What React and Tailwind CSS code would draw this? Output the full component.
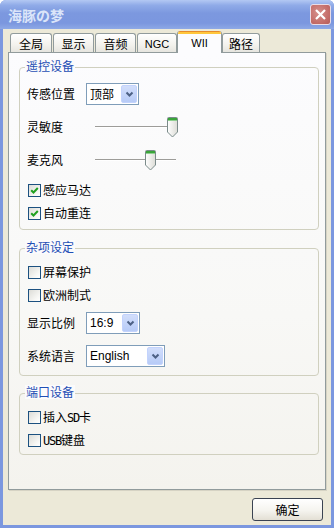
import React from "react";

const CJK = "font-['Noto_Sans_CJK_SC',sans-serif]";
const LAT = "font-['Liberation_Sans','Noto_Sans_CJK_SC',sans-serif]";
const MONO = "font-['DejaVu_Sans_Mono',monospace] text-[12px] tracking-[-1.2px]";

function Chevron() {
  return (
    <svg width="9" height="7" viewBox="0 0 9 7">
      <path d="M1.5 1.5 L4.5 4.5 L7.5 1.5" stroke="#4d6185" strokeWidth="2" fill="none" />
    </svg>
  );
}

function Select({ value, width, latin }) {
  return (
    <div
      className={`h-[22px] border border-[#7f9db9] bg-white flex items-center justify-between pl-[3px] pr-[1px] ${width}`}
    >
      <span className={`text-[12px] leading-[14px] text-black ${latin ? LAT : CJK}`}>{value}</span>
      <span className="w-[16px] h-[18px] rounded-[2px] border border-[#c3d3fd] bg-[linear-gradient(180deg,#d2defb,#b7cbf7)] flex items-center justify-center">
        <Chevron />
      </span>
    </div>
  );
}

function Checkbox({ checked }) {
  return (
    <span className="w-[13px] h-[13px] border border-[#1c5180] bg-[linear-gradient(135deg,#dcdcd7,#f7f7f4_70%,#ffffff)] flex items-center justify-center shrink-0">
      {checked && (
        <svg width="9" height="9" viewBox="0 0 9 9">
          <path d="M1.2 4.2 L3.5 6.5 L7.8 2" stroke="#21a121" strokeWidth="2" fill="none" />
        </svg>
      )}
    </span>
  );
}

function Thumb() {
  return (
    <svg width="11" height="21" viewBox="0 0 11 21">
      <defs>
        <linearGradient id="tb" x1="0" y1="0" x2="1" y2="0">
          <stop offset="0" stopColor="#ffffff" />
          <stop offset="1" stopColor="#dcdcd6" />
        </linearGradient>
      </defs>
      <path
        d="M1.5 0.5 H9.5 Q10.5 0.5 10.5 1.5 V15 L5.5 20 L0.5 15 V1.5 Q0.5 0.5 1.5 0.5 Z"
        fill="url(#tb)"
        stroke="#7b8b8a"
      />
      <rect x="1" y="1" width="9" height="2" fill="#3aa43a" />
      <rect x="1" y="3" width="9" height="1" fill="#8fd08f" />
    </svg>
  );
}

function Slider({ pos }) {
  const left = pos === "max" ? "left-[81px]" : "left-[59px]";
  return (
    <div className="relative w-[93px] h-[22px]">
      <div className="absolute left-[9px] w-[81px] top-[10px] h-[2px] border-t border-[#9d9c99] border-b border-b-white" />
      <div className={`absolute top-[1px] ${left}`}>
        <Thumb />
      </div>
    </div>
  );
}

function Group({ title, children, className }) {
  return (
    <div className={`relative border border-[#d0d0bf] rounded-[4px] ${className}`}>
      <span
        className={`absolute left-[5px] -top-[9px] px-[1px] text-[12px] leading-[14px] text-[#1f4fb5] bg-[#fbfbfc] ${CJK}`}
      >
        {title}
      </span>
      {children}
    </div>
  );
}

function Label({ children }) {
  return <span className={`w-[59px] text-[12px] leading-[14px] text-black ${CJK}`}>{children}</span>;
}

function CheckRow({ checked, children, className = "" }) {
  return (
    <div className={`h-[22px] flex items-center gap-[2px] ml-[1px] ${className}`}>
      <Checkbox checked={checked} />
      <span className={`text-[12px] leading-[14px] text-black ${CJK}`}>{children}</span>
    </div>
  );
}

function Tab({ children, width, latin }) {
  return (
    <div
      className={`h-[19px] border border-b-0 border-[#919b9c] rounded-t-[3px] bg-[linear-gradient(180deg,#ffffff,#f3f2ed_60%,#e6e5df)] flex items-center justify-center pt-[2px] text-black ${width} ${
        latin ? `${LAT} text-[11px]` : `${CJK} text-[12px]`
      }`}
    >
      {children}
    </div>
  );
}

export default function App() {
  return (
    <div className="w-[334px] h-[528px] bg-[#7b97df] flex flex-col overflow-hidden rounded-t-[6px]">
      {/* title bar */}
      <div className="h-[29px] shrink-0 flex items-center justify-between pl-[8px] pr-[3px] bg-[linear-gradient(180deg,#b3c8f3_0%,#90abe8_18%,#7c98df_45%,#7b97df_80%,#8ea9e6_100%)]">
        <span className={`text-[14px] font-bold text-[#dbe5f9] leading-[16px] ${CJK}`}>海豚の梦</span>
        <div className="w-[21px] h-[21px] rounded-[3px] border border-[#e9dce6] bg-[radial-gradient(circle_at_40%_40%,#d6908c,#c26a66_70%,#b35c5a)] flex items-center justify-center">
          <svg width="13" height="13" viewBox="0 0 13 13">
            <path d="M2 2 L11 11 M11 2 L2 11" stroke="#ffffff" strokeWidth="2.2" />
          </svg>
        </div>
      </div>

      {/* body */}
      <div className="flex-1 mx-[3px] mb-[3px] bg-[#ece9d8] flex flex-col">
        {/* tabs */}
        <div className="h-[23px] flex items-end pl-[7px] relative z-10">
          <Tab width="w-[42px]">全局</Tab>
          <div className="ml-[1px]">
            <Tab width="w-[41px]">显示</Tab>
          </div>
          <div className="ml-[1px]">
            <Tab width="w-[41px]">音频</Tab>
          </div>
          <div className="ml-[1px]">
            <Tab width="w-[40px]" latin>
              NGC
            </Tab>
          </div>
          <div className="w-[45px] h-[22px] -mb-[1px] border-x border-[#919b9c] rounded-t-[3px] overflow-hidden bg-[#fcfcfe] flex flex-col">
            <div className="h-[1px] bg-[#e68b2c]" />
            <div className="h-[2px] bg-[#ffc73c]" />
            <div className={`flex-1 flex items-start justify-center pt-[1px] text-[11px] text-black ${LAT}`}>WII</div>
          </div>
          <Tab width="w-[38px]">路径</Tab>
        </div>

        {/* panel */}
        <div className="mx-[5px] h-[438px] border border-[#919b9c] bg-[linear-gradient(180deg,#fcfcfe,#f8f8f6_60%,#f4f3ee)] shadow-[1px_1px_0_#d6d3c4] pt-[14px] pl-[10px] pr-[6px] flex flex-col">
          <Group title="遥控设备" className="pt-[15px] pb-[5px] pl-[7px]">
            <div className="h-[22px] flex items-center">
              <Label>传感位置</Label>
              <Select value="顶部" width="w-[53px]" />
            </div>
            <div className="h-[22px] flex items-center mt-[11px]">
              <Label>灵敏度</Label>
              <Slider pos="max" />
            </div>
            <div className="h-[22px] flex items-center mt-[11px]">
              <Label>麦克风</Label>
              <Slider pos="mid" />
            </div>
            <CheckRow checked className="mt-[8px]">
              感应马达
            </CheckRow>
            <CheckRow checked className="mt-[1px]">
              自动重连
            </CheckRow>
          </Group>

          <Group title="杂项设定" className="mt-[18px] pt-[12px] pb-[8px] pl-[7px]">
            <CheckRow>屏幕保护</CheckRow>
            <CheckRow className="mt-[1px]">欧洲制式</CheckRow>
            <div className="h-[22px] flex items-center mt-[6px]">
              <Label>显示比例</Label>
              <Select value="16:9" width="w-[54px]" latin />
            </div>
            <div className="h-[22px] flex items-center mt-[11px]">
              <Label>系统语言</Label>
              <Select value="English" width="w-[79px]" latin />
            </div>
          </Group>

          <Group title="端口设备" className="mt-[17px] pt-[12px] pb-[3px] pl-[7px]">
            <CheckRow>
              插入<span className={MONO}>SD</span>卡
            </CheckRow>
            <CheckRow className="mt-[1px]">
              <span className={MONO}>USB</span>键盘
            </CheckRow>
          </Group>
        </div>

        {/* footer */}
        <div className="mt-[8px] flex justify-end pr-[8px]">
          <button
            className={`w-[71px] h-[23px] rounded-[3px] border border-[#3a4352] bg-[linear-gradient(180deg,#ffffff,#f5f4ef_55%,#e3dfd4)] text-[12px] leading-[14px] text-black ${CJK}`}
          >
            确定
          </button>
        </div>
      </div>
    </div>
  );
}
